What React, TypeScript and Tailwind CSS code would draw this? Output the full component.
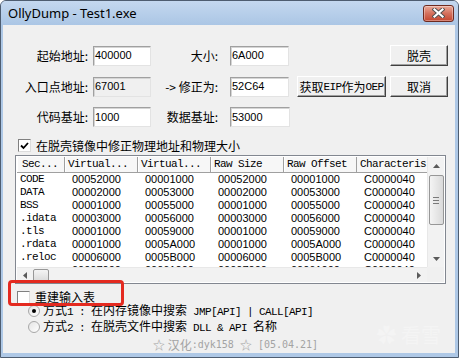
import React from "react";

const CJK = "font-['Noto_Sans_CJK_SC',sans-serif]";
const SANS = "font-['Liberation_Sans','Noto_Sans_CJK_SC',sans-serif]";
// SimSun-style half-width ASCII: 6px per char
const MONO = "font-['Liberation_Mono',monospace] text-[11px] tracking-[-0.6px]";
const FOOTMONO = "font-['DejaVu_Sans_Mono',monospace] text-[10px]";

const headers = ["Sec...", "Virtual...", "Virtual...", "Raw Size", "Raw Offset", "Characteris"];
const colW = ["w-[48px]", "w-[73px]", "w-[73px]", "w-[73px]", "w-[73px]", "w-[70px]"];

const sections = [
  ["CODE", "00052000", "00001000", "00052000", "00001000", "C0000040"],
  ["DATA", "00002000", "00053000", "00002000", "00053000", "C0000040"],
  ["BSS", "00001000", "00055000", "00001000", "00055000", "C0000040"],
  [".idata", "00003000", "00056000", "00003000", "00056000", "C0000040"],
  [".tls", "00001000", "00059000", "00001000", "00059000", "C0000040"],
  [".rdata", "00001000", "0005A000", "00001000", "0005A000", "C0000040"],
  [".reloc", "00006000", "0005B000", "00006000", "0005B000", "C0000040"],
  [".rsrc", "00007000", "00061000", "00007000", "00061000", "C0000040"],
];

function Field({ value, readOnly }: { value: string; readOnly?: boolean }) {
  return (
    <div
      className={`h-[20px] flex items-center pl-[1px] border border-t-[#a0a0a0] border-l-[#a0a0a0] border-r-[#e3e3e3] border-b-[#e3e3e3] shadow-[inset_1px_1px_0_#d5d5d5] ${SANS} text-[11px] ${
        readOnly ? "bg-[#f0f0f0]" : "bg-white"
      }`}
    >
      {value}
    </div>
  );
}

function Btn({ children, className }: { children: React.ReactNode; className?: string }) {
  return (
    <div
      className={`h-[21px] flex items-center justify-center bg-[#f0f0f0] border border-t-white border-l-white border-r-[#404040] border-b-[#404040] shadow-[inset_-1px_-1px_0_#a0a0a0] ${CJK} text-[12px] leading-[14px] ${className ?? ""}`}
    >
      {children}
    </div>
  );
}

function Label({ children, className }: { children: React.ReactNode; className: string }) {
  return <div className={`${className} text-right ${CJK} text-[12px] leading-[20px] whitespace-nowrap`}>{children}</div>;
}

function Check({ checked }: { checked?: boolean }) {
  return (
    <div className="w-[13px] h-[13px] shrink-0 border border-t-[#808080] border-l-[#808080] border-r-[#dcdcdc] border-b-[#dcdcdc] bg-white flex items-center justify-center">
      {checked && (
        <svg width="9" height="8" viewBox="0 0 9 8">
          <path d="M1 3.5 L3.5 6 L8 1" stroke="#000" strokeWidth="1.8" fill="none" />
        </svg>
      )}
    </div>
  );
}

function Radio({ on }: { on?: boolean }) {
  return (
    <div className="w-[12px] h-[12px] shrink-0 rounded-full border border-[#a8a8a8] bg-linear-to-br from-[#e4e4e4] to-white flex items-center justify-center">
      {on && <div className="w-[4px] h-[4px] rounded-full bg-black" />}
    </div>
  );
}

function Arrow({ dir }: { dir: "up" | "down" | "left" | "right" }) {
  const d = {
    up: "M0 4 L3.5 0 L7 4Z",
    down: "M0 0 L3.5 4 L7 0Z",
    left: "M4 0 L0 3.5 L4 7Z",
    right: "M0 0 L4 3.5 L0 7Z",
  }[dir];
  const vertical = dir === "up" || dir === "down";
  return (
    <svg width={vertical ? 7 : 4} height={vertical ? 4 : 7} viewBox={vertical ? "0 0 7 4" : "0 0 4 7"}>
      <path d={d} fill="#5a5a5a" />
    </svg>
  );
}

function CloseBtn() {
  return (
    <div className="w-[31px] h-[17px] rounded-[3px] border border-[#6e2a1f] bg-linear-to-b from-[#eaa998] via-[#d4705c] to-[#c4452e] shadow-[inset_0_0_0_1px_rgba(255,255,255,0.35)] flex items-center justify-center">
      <svg width="13" height="10" viewBox="0 0 13 10">
        <path d="M2.5 1.5 L10.5 8.5 M10.5 1.5 L2.5 8.5" stroke="#4f4f4f" strokeWidth="4" strokeLinecap="square" />
        <path d="M2.5 1.5 L10.5 8.5 M10.5 1.5 L2.5 8.5" stroke="#fff" strokeWidth="2.2" strokeLinecap="square" />
      </svg>
    </div>
  );
}

function SectionList() {
  return (
    <div className="mt-[3px] ml-[12px] w-[431px] h-[129px] border border-[#828790] p-[1px] bg-white flex flex-col">
      <div className="flex flex-1 min-h-0">
        <div className="w-[410px] flex flex-col overflow-hidden">
          {/* header */}
          <div className="h-[16px] shrink-0 flex border-b border-[#a0a0a0] bg-[#f7f7f7]">
            {headers.map((h, i) => (
              <div
                key={i}
                className={`${colW[i]} shrink-0 overflow-hidden whitespace-pre leading-[15px] ${MONO} ${
                  i === 0 ? "pl-[5px]" : "pl-[3px]"
                } ${i < 5 ? "border-r border-[#a0a0a0] shadow-[inset_1px_0_0_#fff]" : ""}`}
              >
                {h}
              </div>
            ))}
          </div>
          {/* rows */}
          <div className="flex-1 overflow-hidden">
            {sections.map((r, ri) => (
              <div key={ri} className="h-[13px] flex items-center">
                {r.map((c, ci) => (
                  <div
                    key={ci}
                    className={`${colW[ci]} shrink-0 whitespace-pre leading-[13px] ${
                      ci === 0 ? `pl-[3px] ${MONO}` : `pl-[7px] ${SANS} text-[11px]`
                    }`}
                  >
                    {c}
                  </div>
                ))}
              </div>
            ))}
          </div>
        </div>
        {/* vertical scrollbar */}
        <div className="w-[17px] bg-[#f2f2f2] border-l border-[#e8e8e8] flex flex-col items-center">
          <div className="h-[17px] flex items-center justify-center">
            <Arrow dir="up" />
          </div>
          <div className="mt-[1px] w-[15px] h-[50px] rounded-[2px] border border-[#979797] bg-linear-to-r from-[#f4f4f4] to-[#dadada] flex flex-col items-center justify-center gap-[2px]">
            <div className="w-[6px] h-[1px] bg-[#7a7a7a]" />
            <div className="w-[6px] h-[1px] bg-[#7a7a7a]" />
            <div className="w-[6px] h-[1px] bg-[#7a7a7a]" />
          </div>
          <div className="flex-1" />
          <div className="h-[17px] flex items-center justify-center">
            <Arrow dir="down" />
          </div>
        </div>
      </div>
      {/* horizontal scrollbar */}
      <div className="h-[15px] shrink-0 flex bg-[#f2f2f2]">
        <div className="w-[410px] flex items-center border-t border-[#e8e8e8]">
          <div className="w-[16px] flex justify-center">
            <Arrow dir="left" />
          </div>
          <div className="w-[16px] h-[13px] rounded-[2px] border border-[#979797] bg-linear-to-b from-[#f4f4f4] to-[#dadada]" />
          <div className="flex-1" />
          <div className="w-[16px] flex justify-center">
            <Arrow dir="right" />
          </div>
        </div>
        <div className="w-[17px] bg-[#f0f0f0]" />
      </div>
    </div>
  );
}

export default function App() {
  return (
    <div className="w-[459px] h-[358px] flex flex-col rounded-t-[6px] border border-[#4e5d70] bg-[#aec8e6] overflow-hidden">
      {/* title bar */}
      <div className="h-[24px] shrink-0 flex items-center justify-between pl-[7px] pr-[4px] bg-linear-to-b from-[#c4d8ef] to-[#abc6e5]">
        <span className="font-['Noto_Sans',sans-serif] text-[13px] leading-[16px] text-black">OllyDump - Test1.exe</span>
        <CloseBtn />
      </div>

      <div className="flex-1 flex pl-[2px] pr-[3px] pb-[4px]">
        <div className="relative flex-1 bg-[#f0f0f0] flex flex-col text-black">
          {/* address fields */}
          <div className="pt-[20px] pr-[7px] flex flex-col gap-[10px]">
            <div className="flex items-center">
              <Label className="w-[85px]">起始地址:</Label>
              <div className="ml-[5px] w-[58px]">
                <Field value="400000" />
              </div>
              <Label className="w-[67px]">大小:</Label>
              <div className="ml-[12px] w-[59px]">
                <Field value="6A000" />
              </div>
              <Btn className="ml-auto w-[58px]">脱壳</Btn>
            </div>
            <div className="flex items-center">
              <Label className="w-[85px]">入口点地址:</Label>
              <div className="ml-[5px] w-[58px]">
                <Field value="67001" readOnly />
              </div>
              <Label className="w-[67px]">-&gt; 修正为:</Label>
              <div className="ml-[12px] w-[59px]">
                <Field value="52C64" />
              </div>
              <Btn className="ml-[8px] w-[89px]">
                获取<span className={MONO}>EIP</span>作为<span className={MONO}>OEP</span>
              </Btn>
              <Btn className="ml-auto w-[58px]">取消</Btn>
            </div>
            <div className="flex items-center">
              <Label className="w-[85px]">代码基址:</Label>
              <div className="ml-[5px] w-[58px]">
                <Field value="1000" />
              </div>
              <Label className="w-[67px]">数据基址:</Label>
              <div className="ml-[12px] w-[60px]">
                <Field value="53000" />
              </div>
            </div>
          </div>

          <div className="mt-[12px] pl-[15px] h-[13px] flex items-center gap-[5px]">
            <Check checked />
            <span className={`${CJK} text-[12px] leading-[13px]`}>在脱壳镜像中修正物理地址和物理大小</span>
          </div>

          <SectionList />

          <div className="mt-[7px] pl-[14px] h-[13px] flex items-center gap-[5px]">
            <Check />
            <span className={`${CJK} text-[12px] leading-[12px] border-b border-dotted border-black`}>重建输入表</span>
          </div>

          <div className="mt-[1px] pl-[25px] h-[12px] flex items-center gap-[3px]">
            <Radio on />
            <span className={`${CJK} text-[12px] leading-[12px] whitespace-pre`}>
              方式<span className={MONO}>1 : </span>在内存镜像中搜索<span className={MONO}> JMP[API] | CALL[API]</span>
            </span>
          </div>
          <div className="mt-[4px] pl-[25px] h-[12px] flex items-center gap-[3px]">
            <Radio />
            <span className={`${CJK} text-[12px] leading-[12px] whitespace-pre`}>
              方式<span className={MONO}>2 : </span>在脱壳文件中搜索<span className={MONO}> DLL &amp; API </span>名称
            </span>
          </div>

          <div className={`mt-[5px] pl-[150px] h-[14px] flex items-center whitespace-pre text-[#a3a3a3] ${CJK} text-[12px] leading-[14px]`}>
            ☆ 汉化<span className={FOOTMONO}>:dyk158 </span>☆<span className={FOOTMONO}> [05.04.21]</span>
          </div>

          {/* faint watermark */}
          <div className={`absolute right-[14px] bottom-[6px] ${CJK} text-[20px] leading-[24px] text-[#f4f4f4] select-none`}>
            ✿ 看雪
          </div>

          {/* red annotation box */}
          <div className="absolute left-[5px] top-[255px] w-[116px] h-[26px] rounded-[4px] border-[3px] border-[#e42a20]" />
        </div>
      </div>
    </div>
  );
}
